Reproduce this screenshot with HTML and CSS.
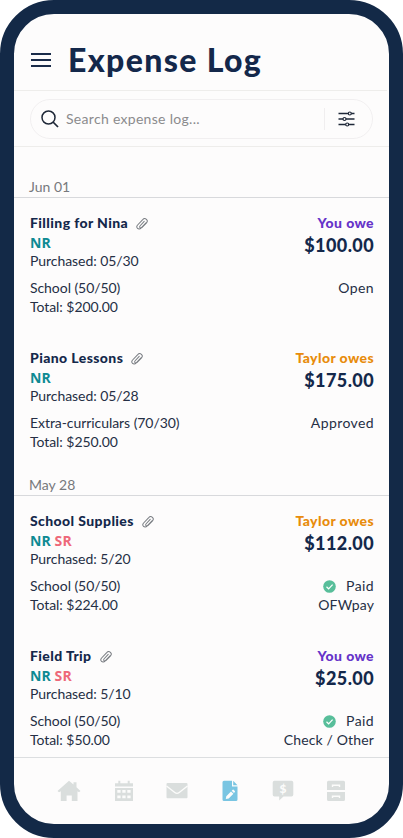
FILE: index.html
```
<!DOCTYPE html>
<html lang="en">

<head>
  <meta charset="utf-8">
  <title>Expense Log</title>
  <link rel="stylesheet" href="styles.css">
</head>

<body>
  <svg width="0" height="0" class="defs">
    <symbol id="clip" viewBox="0 0 12 14">
      <g transform="rotate(8 6 7)">
        <path d="M9.8 5.2L5.6 11.2C4.7 12.5 3.3 12.8 2.2 12C1.1 11.2 1 9.8 1.8 8.6L6.1 2.5C6.9 1.3 8.4.9 9.7 1.7C11 2.6 11.1 4 10.3 5.2L6.6 10.4C6 11.2 5.2 11.3 4.6 10.9C4 10.5 3.9 9.7 4.4 9L7.8 4.1" fill="none" stroke="#777b80" stroke-width="1" stroke-linecap="round"/>
      </g>
    </symbol>
    <symbol id="check" viewBox="0 0 13 13">
      <circle cx="6.5" cy="6.5" r="6.3" fill="#58be9a"/>
      <path d="M3.5 6.8L5.6 8.8L9.6 4.6" fill="none" stroke="#fff" stroke-width="1.2"/>
    </symbol>
  </svg>

  <div class="phone">
    <div class="header">
      <svg class="menu" viewBox="0 0 20 14">
        <path d="M0 1H20M0 7H20M0 13H20" stroke="#1a2c4a" stroke-width="2"/>
      </svg>
      <div class="title">Expense Log</div>
    </div>

    <div class="search">
      <div class="search-box">
        <svg class="glass" viewBox="0 0 18 18">
          <circle cx="7.5" cy="7.5" r="6.5" fill="none" stroke="#1f2838" stroke-width="1.5"/>
          <path d="M12 12L17 17" stroke="#1f2838" stroke-width="1.7"/>
        </svg>
        <div class="placeholder">Search expense log...</div>
        <div class="filter">
          <svg viewBox="0 0 16 16">
            <path d="M0 2.5H16M0 8H16M0 13.5H16" stroke="#1f2838" stroke-width="1.5"/>
            <g fill="#fdfbfc" stroke="#1f2838" stroke-width="1.2">
              <circle cx="11.3" cy="2.5" r="1.5"/>
              <circle cx="6" cy="8" r="1.5"/>
              <circle cx="8.7" cy="13.5" r="1.5"/>
            </g>
          </svg>
        </div>
      </div>
    </div>

    <div class="list">
      <div class="date first">Jun 01</div>

      <div class="entry">
        <div class="left">
          <div class="name">Filling for Nina<svg class="clip"><use href="#clip"/></svg></div>
          <div class="kids"><span class="nr">NR</span></div>
          <div>Purchased: 05/30</div>
          <div class="gap">School (50/50)</div>
          <div>Total: $200.00</div>
        </div>
        <div class="right">
          <div class="owe you">You owe</div>
          <div class="amount">$100.00</div>
          <div class="status">Open</div>
        </div>
      </div>

      <div class="entry">
        <div class="left">
          <div class="name">Piano Lessons<svg class="clip"><use href="#clip"/></svg></div>
          <div class="kids"><span class="nr">NR</span></div>
          <div>Purchased: 05/28</div>
          <div class="gap">Extra-curriculars (70/30)</div>
          <div>Total: $250.00</div>
        </div>
        <div class="right">
          <div class="owe taylor">Taylor owes</div>
          <div class="amount">$175.00</div>
          <div class="status">Approved</div>
        </div>
      </div>

      <div class="date">May 28</div>

      <div class="entry">
        <div class="left">
          <div class="name">School Supplies<svg class="clip"><use href="#clip"/></svg></div>
          <div class="kids"><span class="nr">NR</span> <span class="sr">SR</span></div>
          <div>Purchased: 5/20</div>
          <div class="gap">School (50/50)</div>
          <div>Total: $224.00</div>
        </div>
        <div class="right">
          <div class="owe taylor">Taylor owes</div>
          <div class="amount">$112.00</div>
          <div class="status"><svg class="check"><use href="#check"/></svg>Paid</div>
          <div class="method">OFWpay</div>
        </div>
      </div>

      <div class="entry">
        <div class="left">
          <div class="name">Field Trip<svg class="clip"><use href="#clip"/></svg></div>
          <div class="kids"><span class="nr">NR</span> <span class="sr">SR</span></div>
          <div>Purchased: 5/10</div>
          <div class="gap">School (50/50)</div>
          <div>Total: $50.00</div>
        </div>
        <div class="right">
          <div class="owe you">You owe</div>
          <div class="amount">$25.00</div>
          <div class="status"><svg class="check"><use href="#check"/></svg>Paid</div>
          <div class="method">Check / Other</div>
        </div>
      </div>
    </div>

    <div class="nav">
      <svg class="home" viewBox="0 0 24 22">
        <path d="M12 .8L16.5 4.6V2.3H19.5V7.3L23.5 11L22 12.3L20.5 11.3V21H14.8V15.5H9.6V21H3.8V11.3L2 12.3L.5 11Z"/>
      </svg>
      <svg viewBox="0 0 24 22">
        <path d="M3 3.2H6.3V.8H8.3V3.2H15.7V.8H17.7V3.2H21V6.6H3ZM3 8H21V21H3Z"/>
        <path class="cut" d="M5.3 10H8.6V12.8H5.3ZM10.3 10H13.6V12.8H10.3ZM15.3 10H18.6V12.8H15.3ZM5.3 15.4H8.6V18.2H5.3ZM10.3 15.4H13.6V18.2H10.3ZM15.3 15.4H18.6V18.2H15.3Z"/>
      </svg>
      <svg viewBox="0 0 24 22">
        <rect x="1.5" y="3" width="21" height="15.3" rx="1"/>
        <path d="M1.5 6L9.8 12.5Q12 14.2 14.2 12.5L22.5 6" fill="none" stroke="#fcfcfb" stroke-width="1.4"/>
      </svg>
      <svg class="active" viewBox="0 0 24 22">
        <path d="M6 .8H14V6.5H19.5V19.5Q19.5 21 18 21H6Q4.5 21 4.5 19.5V2.3Q4.5 .8 6 .8ZM15.2 .8L19.5 5.3H15.2Z"/>
        <path class="cut" d="M8.3 16.2L13 11.4L15.4 13.8L10.7 18.5L7.8 19ZM13.7 10.7L14.7 9.8Q15.3 9.4 15.8 9.9L16.8 10.9Q17.3 11.5 16.8 12.1L16 13Z"/>
      </svg>
      <svg viewBox="0 0 24 22">
        <path d="M3.5 .8H20.5Q22.3 .8 22.3 2.6V14.8Q22.3 16.5 20.5 16.5H12.5L8.2 20.5V16.5H3.5Q1.7 16.5 1.7 14.8V2.6Q1.7 .8 3.5 .8Z"/>
        <text class="dollar" x="12" y="13" text-anchor="middle">$</text>
      </svg>
      <svg viewBox="0 0 24 22">
        <path d="M4.5 .8H19.5Q21 .8 21 2.3V10H3V2.3Q3 .8 4.5 .8ZM3 12H21V19.5Q21 21 19.5 21H4.5Q3 21 3 19.5Z"/>
        <path d="M8.5 7V5.2H15.5V7M8.5 18V16.2H15.5V18" fill="none" stroke="#fcfcfb" stroke-width="1.4"/>
      </svg>
    </div>
  </div>
</body>

</html>
```
FILE: styles.css
```
* {
  box-sizing: border-box;
}

body {
  margin: 0;
  background: #fff;
  font-family: Lato, "Liberation Sans", sans-serif;
  font-size: 14px;
  line-height: 19px;
  color: #252f45;
}

.defs {
  display: block;
}

.phone {
  display: flex;
  flex-direction: column;
  width: 403px;
  height: 838px;
  border: 14px solid #132947;
  border-radius: 54px;
  background: #fdfcfc;
  overflow: hidden;
}

.header {
  display: flex;
  align-items: center;
  height: 77px;
  padding: 15px 0 0 17px;
  margin-right: 2px;
  border-bottom: 1px solid #eeedeb;
}

.menu {
  width: 20px;
  height: 14px;
  margin-right: 17px;
}

.title {
  font-size: 32px;
  font-weight: 900;
  line-height: 40px;
  letter-spacing: 1.35px;
  color: #14284b;
}

.search {
  height: 56px;
  padding: 8px 16px;
  border-bottom: 1px solid #eeedeb;
}

.search-box {
  display: flex;
  align-items: center;
  height: 40px;
  border: 1px solid #f1eff0;
  border-radius: 20px;
}

.glass {
  width: 18px;
  height: 18px;
  margin-left: 10px;
}

.placeholder {
  flex: 1;
  margin-left: 7px;
  padding-bottom: 2px;
  letter-spacing: 0.3px;
  color: #8b8b8d;
}

.filter {
  width: 48px;
  height: 22px;
  padding: 3px 0 0 13px;
  border-left: 1px solid #f0eeef;
}

.filter svg {
  display: block;
  width: 17px;
  height: 16px;
}

.list {
  height: 610px;
}

.date {
  height: 45px;
  padding: 24px 15px 0;
  margin-top: -32px;
  border-bottom: 1px solid #d8d9dc;
  color: #77797d;
}

.date.first {
  height: 51px;
  padding-top: 30px;
  margin-top: 0;
}

.entry {
  display: flex;
  justify-content: space-between;
  height: 103px;
  margin: 15px 15px 32px 16px;
}

.left {
  letter-spacing: -0.06px;
}

.name {
  display: flex;
  align-items: center;
  font-weight: 900;
  letter-spacing: 0.4px;
  color: #14284b;
}

.clip {
  width: 12px;
  height: 14px;
  margin: 2px 0 0 8px;
}

.kids {
  padding-top: 1px;
  margin-bottom: -1px;
  font-family: "Open Sans", "Noto Sans", sans-serif;
  font-weight: 700;
  letter-spacing: 0.1px;
}

.nr {
  color: #0e8a93;
}

.sr {
  color: #ee6879;
}

.gap {
  margin-top: 8px;
}

.right {
  display: flex;
  flex-direction: column;
  align-items: flex-end;
}

.owe {
  font-weight: 900;
  letter-spacing: 0.4px;
}

.you {
  color: #6633c9;
}

.taylor {
  color: #e88c0c;
}

.amount {
  height: 26px;
  font-size: 18px;
  font-weight: 900;
  line-height: 26px;
  letter-spacing: 0.4px;
  color: #14284b;
}

.status {
  display: flex;
  align-items: center;
  margin-top: 20px;
  letter-spacing: 0.4px;
}

.method {
  letter-spacing: 0.15px;
}

.check {
  width: 13px;
  height: 13px;
  margin: 1px 10px 0 0;
}

.nav {
  display: flex;
  gap: 29px;
  height: 67px;
  padding: 22px 0 0 43px;
  border-top: 1px solid #dcdee0;
}

.nav svg {
  width: 24px;
  height: 22px;
  fill: #dadedd;
}

.nav .home {
  margin-right: 2px;
}

.nav .active {
  fill: #79c5e2;
}

.nav .cut,
.nav .dollar {
  fill: #fcfcfb;
}

.dollar {
  font-size: 12px;
  font-weight: 900;
}
```
